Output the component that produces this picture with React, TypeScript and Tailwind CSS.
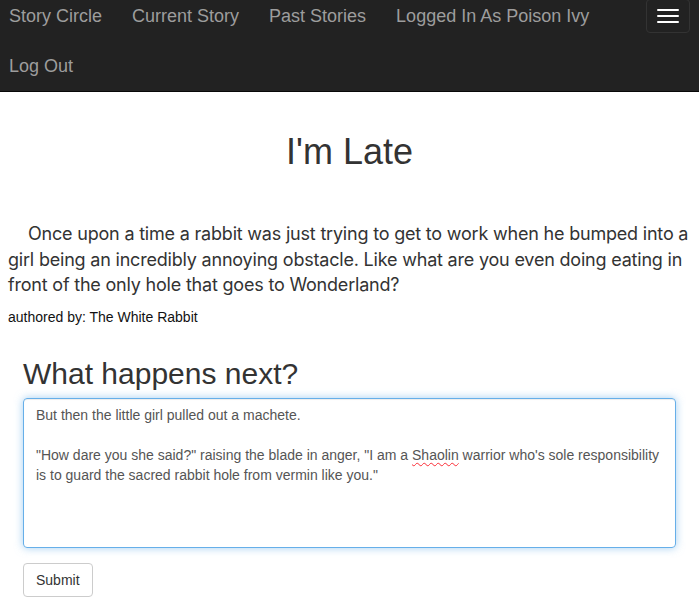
import React from "react";

export default function App() {
  const links = ["Story Circle", "Current Story", "Past Stories", "Logged In As Poison Ivy", "Log Out"];
  return (
    <div className="min-h-[608px] bg-white text-[#333]" style={{ fontFamily: '"Liberation Sans", Arial, sans-serif' }}>
      <nav className="flex h-[92px] border-b border-[#080808] bg-[#222]">
        <div className="flex flex-1 flex-wrap content-start gap-y-[30px] pl-[9px] pt-[6px]">
          {links.map((l) => (
            <a key={l} className="block h-[20px] pr-[30px] text-[18px] leading-[20px] text-[#9d9d9d]">
              {l}
            </a>
          ))}
        </div>
        <div className="pr-[9px]">
          <button className="mt-[-1px] flex h-[34px] w-[44px] flex-col items-center justify-center gap-[4px] rounded-[4px] border border-[#333]">
            <span className="block h-[2px] w-[22px] rounded-[1px] bg-white" />
            <span className="block h-[2px] w-[22px] rounded-[1px] bg-white" />
            <span className="block h-[2px] w-[22px] rounded-[1px] bg-white" />
          </button>
        </div>
      </nav>
      <main className="px-[8px]">
        <h1 className="mt-[40px] text-center text-[36px] leading-[40px]">I'm Late</h1>
        <p
          className="mt-[49px] indent-[20px] text-[18px] leading-[25.7px] tracking-[-0.2px] text-[#333]"
          style={{ fontFamily: 'Inter, "Noto Sans", sans-serif' }}
        >
          Once upon a time a rabbit was just trying to get to work when he bumped into a girl being an incredibly annoying obstacle. Like what are you even doing eating in front of the only hole that goes to Wonderland?
        </p>
        <p className="mt-[9px] text-[14px] leading-[20px] text-[#111]">authored by: The White Rabbit</p>
        <div className="px-[15px]">
          <h2 className="mt-[30px] text-[30px] leading-[33px]">What happens next?</h2>
          <div className="mt-[8px] h-[150px] rounded-[4px] border border-[#66afe9] px-[12px] pt-[6px] text-[14px] leading-[20px] text-[#555] shadow-[inset_0_1px_1px_rgba(0,0,0,0.075),0_0_8px_rgba(102,175,233,0.6)]">
            <div>But then the little girl pulled out a machete.</div>
            <div className="h-[20px]" />
            <div>
              "How dare you she said?" raising the blade in anger, "I am a{" "}
              <span className="underline decoration-red-500 decoration-wavy decoration-1 underline-offset-2">Shaolin</span> warrior who's sole responsibility is to guard the sacred rabbit hole from vermin like you."
            </div>
          </div>
          <button className="mt-[15px] h-[34px] rounded-[4px] border border-[#ccc] bg-white px-[12px] text-[14px] text-[#333]">
            Submit
          </button>
        </div>
      </main>
    </div>
  );
}
